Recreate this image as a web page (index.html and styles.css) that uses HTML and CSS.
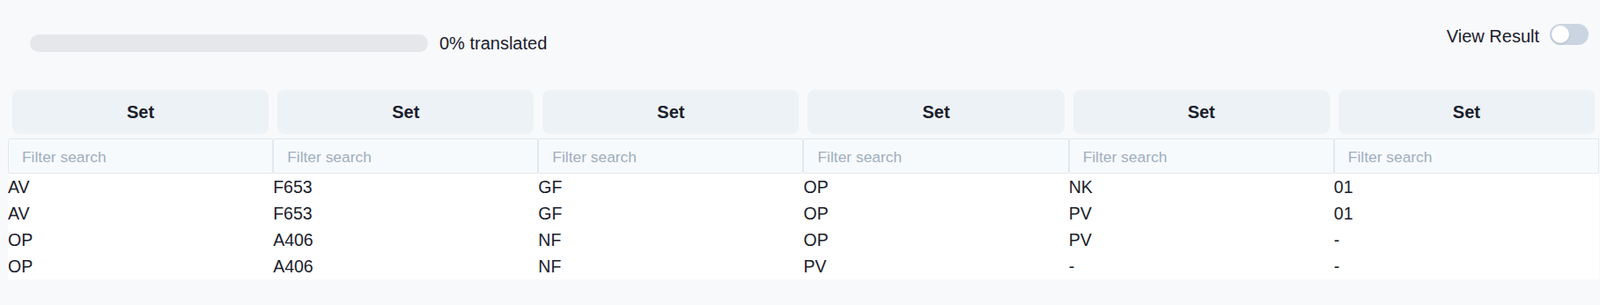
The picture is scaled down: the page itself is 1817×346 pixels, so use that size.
FILE: index.html
```html
<!DOCTYPE html>
<html lang="en">

<head>
  <meta charset="utf-8">
  <title>Translations</title>
  <link rel="stylesheet" href="styles.css">
</head>

<body>
  <div class="page">
    <div class="top">
      <div class="progress">
        <div class="bar"><div class="fill"></div></div>
        <span class="progress-label">0% translated</span>
      </div>
      <label class="view">
        <span class="view-label">View Result</span>
        <span class="switch"><span class="knob"></span></span>
      </label>
    </div>

    <table class="grid">
      <thead>
        <tr class="set-row">
          <th><button type="button" class="set">Set</button></th>
          <th><button type="button" class="set">Set</button></th>
          <th><button type="button" class="set">Set</button></th>
          <th><button type="button" class="set">Set</button></th>
          <th><button type="button" class="set">Set</button></th>
          <th><button type="button" class="set">Set</button></th>
        </tr>
        <tr class="filter-row">
          <th><input type="text" class="filter" placeholder="Filter search"></th>
          <th><input type="text" class="filter" placeholder="Filter search"></th>
          <th><input type="text" class="filter" placeholder="Filter search"></th>
          <th><input type="text" class="filter" placeholder="Filter search"></th>
          <th><input type="text" class="filter" placeholder="Filter search"></th>
          <th><input type="text" class="filter" placeholder="Filter search"></th>
        </tr>
      </thead>
      <tbody>
        <tr><td>AV</td><td>F653</td><td>GF</td><td>OP</td><td>NK</td><td>01</td></tr>
        <tr><td>AV</td><td>F653</td><td>GF</td><td>OP</td><td>PV</td><td>01</td></tr>
        <tr><td>OP</td><td>A406</td><td>NF</td><td>OP</td><td>PV</td><td>-</td></tr>
        <tr><td>OP</td><td>A406</td><td>NF</td><td>PV</td><td>-</td><td>-</td></tr>
      </tbody>
    </table>
  </div>
</body>

</html>
```

FILE: styles.css
```css
body {
  margin: 0;
  background-color: #f8f9fb;
  color: #1a202c;
  font-family: "Liberation Sans", Arial, sans-serif;
}

.page {
  padding: 0 1px 0 9px;
}

.top {
  display: flex;
  justify-content: space-between;
  align-items: flex-start;
  height: 97px;
}

.progress {
  display: flex;
  align-items: center;
  margin-top: 39px;
  margin-left: 25px;
}

.bar {
  width: 452px;
  height: 20px;
  border-radius: 10px;
  background-color: #e5e7eb;
  overflow: hidden;
}

.fill {
  width: 0;
  height: 100%;
  background-color: #4299e1;
}

.progress-label {
  margin-left: 13px;
  font-size: 20px;
  line-height: 20px;
}

.view {
  display: flex;
  align-items: flex-start;
  margin-top: 27px;
  margin-right: 12px;
}

.view-label {
  margin-top: 3px;
  margin-right: 12px;
  font-size: 20px;
  line-height: 23px;
}

.switch {
  position: relative;
  display: block;
  width: 44px;
  height: 24px;
  border-radius: 12px;
  background-color: #cbd5e1;
}

.knob {
  position: absolute;
  top: 2px;
  left: 2px;
  width: 20px;
  height: 20px;
  border-radius: 50%;
  background-color: #fff;
  box-shadow: 0 1px 2px rgba(0, 0, 0, 0.15);
}

.grid {
  width: 100%;
  table-layout: fixed;
  border-collapse: collapse;
}

.grid th {
  padding: 0;
}

.set-row th {
  padding: 5px 5px 5px;
}

.set {
  display: block;
  width: 100%;
  height: 50px;
  border: none;
  border-radius: 8px;
  background-color: #edf2f7;
  color: #1a202c;
  font-family: "Liberation Sans", Arial, sans-serif;
  font-size: 20px;
  font-weight: bold;
}

.filter {
  display: block;
  box-sizing: border-box;
  width: 100%;
  height: 40px;
  margin: 0;
  padding: 2px 15px 0;
  border: 1px solid #e2e8f0;
  border-radius: 2px;
  background-color: #f7fafc;
  font-family: "Liberation Sans", Arial, sans-serif;
  font-size: 17.4px;
  color: #1a202c;
}

.filter::placeholder {
  color: #a0aec0;
}

.grid td {
  padding: 0;
  height: 30px;
  background-color: #fff;
  font-size: 19.5px;
  line-height: 30px;
  text-align: left;
}
```
